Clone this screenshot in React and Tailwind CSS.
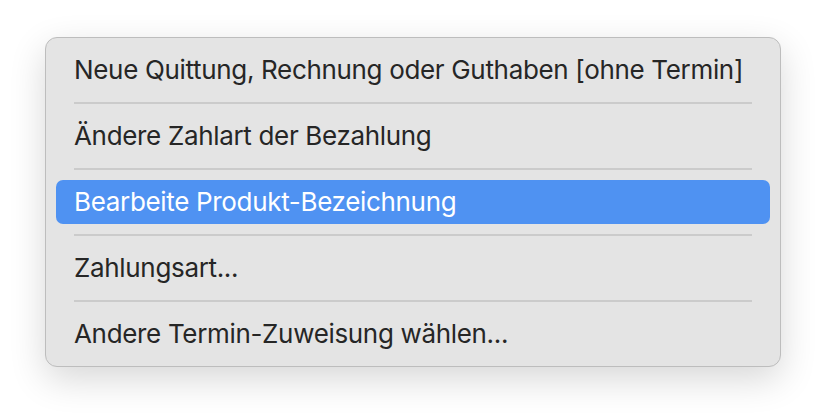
import React from "react";

const items = [
  "Neue Quittung, Rechnung oder Guthaben [ohne Termin]",
  "Ändere Zahlart der Bezahlung",
  "Bearbeite Produkt-Bezeichnung",
  "Zahlungsart...",
  "Andere Termin-Zuweisung wählen...",
];

export default function App() {
  return (
    <div className="w-[826px] h-[420px] bg-white pt-[37px] pl-[45px]" style={{ fontFamily: "Inter, 'Noto Sans', sans-serif" }}>
      <div className="w-[736px] rounded-[12px] border border-[#bdbdbd] bg-[#e4e4e4] p-[10px] shadow-[0_12px_36px_rgba(0,0,0,0.16)]">
        {items.map((text, i) => (
          <div key={i}>
            {i > 0 && <div className="mx-[18px] my-[10px] h-[2px] bg-[#cbcbcb]" />}
            <div
              className={
                "flex h-[44px] items-center whitespace-nowrap rounded-[7px] px-[18px] text-[26px] leading-none tracking-[-0.33px] " +
                (i === 2 ? "bg-[#4f92f2] text-white" : "text-[#262626]")
              }
            >
              {text}
            </div>
          </div>
        ))}
      </div>
    </div>
  );
}
